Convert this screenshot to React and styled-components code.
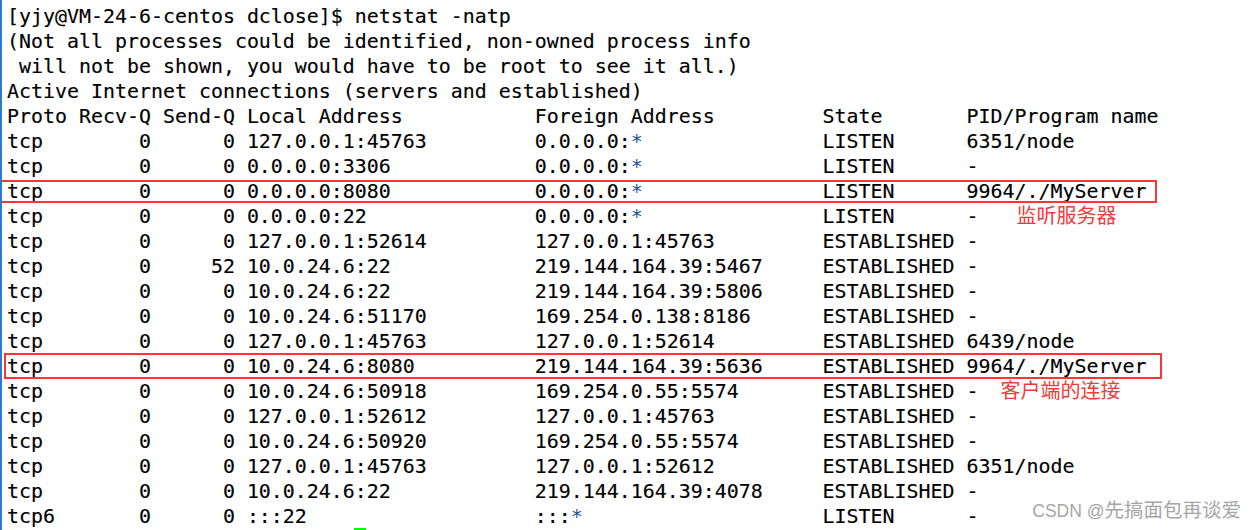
import React from 'react';
import styled, { createGlobalStyle } from 'styled-components';

const GlobalStyle = createGlobalStyle`
  html, body {
    margin: 0;
    padding: 0;
    background: #ffffff;
  }
`;

const Page = styled.div`
  position: relative;
  width: 1255px;
  height: 530px;
  overflow: hidden;
  background: #ffffff;
  border-left: 2px solid #2b7bd3;
  box-sizing: border-box;
`;

const Terminal = styled.div`
  display: flex;
  flex-direction: column;
  padding: 4px 0 0 5px;
  font-family: "DejaVu Sans Mono", "Liberation Mono", monospace;
  font-size: 19.93px;
  line-height: 25px;
  color: #000000;
  -webkit-text-stroke: 0.15px #000;
`;

const Line = styled.div`
  position: relative;
  height: 25px;
  white-space: pre;
`;

const Star = styled.span`
  color: #1f4e9a;
  -webkit-text-stroke: 0;
`;

const Frame = styled.div`
  position: absolute;
  left: ${p => p.left}px;
  top: ${p => p.top}px;
  width: ${p => p.width}px;
  height: ${p => p.height}px;
  border: 2px solid #ff3535;
  box-sizing: border-box;
  pointer-events: none;
`;

const Note = styled.span`
  display: inline-block;
  vertical-align: top;
  margin-left: ${p => p.gap}px;
  font-family: "Noto Sans CJK SC", "Noto Sans", sans-serif;
  font-size: 20px;
  line-height: 21px;
  color: #f23a3a;
  -webkit-text-stroke: 0;
`;

const Watermark = styled.div`
  position: absolute;
  right: 14px;
  bottom: 8px;
  font-family: "Liberation Sans", "Noto Sans CJK SC", sans-serif;
  font-size: 17.5px;
  line-height: 22px;
  color: #a6a6a6;
  white-space: nowrap;
`;

const Handle = styled.span`
  font-family: "Noto Sans CJK SC", sans-serif;
  font-size: 19.5px;
`;

const Cursor = styled.div`
  position: absolute;
  left: 352px;
  top: 528px;
  width: 12px;
  height: 2px;
  background: #00ff00;
`;

const padR = (s, n) => s + ' '.repeat(Math.max(0, n - s.length));
const padL = (s, n) => ' '.repeat(Math.max(0, n - s.length)) + s;

const row = (proto, recv, send, local, foreign, state, pid) =>
  padR(proto, 5) + ' ' + padL(recv, 6) + ' ' + padL(send, 6) + ' ' +
  padR(local, 23) + ' ' + padR(foreign, 23) + ' ' + padR(state, 11) + ' ' + pid;

const lines = [
  { text: '[yjy@VM-24-6-centos dclose]$ netstat -natp' },
  { text: '(Not all processes could be identified, non-owned process info' },
  { text: ' will not be shown, you would have to be root to see it all.)' },
  { text: 'Active Internet connections (servers and established)' },
  { text: 'Proto Recv-Q Send-Q Local Address           Foreign Address         State       PID/Program name' },
  { text: row('tcp', '0', '0', '127.0.0.1:45763', '0.0.0.0:*', 'LISTEN', '6351/node') },
  { text: row('tcp', '0', '0', '0.0.0.0:3306', '0.0.0.0:*', 'LISTEN', '-') },
  { text: row('tcp', '0', '0', '0.0.0.0:8080', '0.0.0.0:*', 'LISTEN', '9964/./MyServer'), frame: { left: -7, top: 1, width: 1157, height: 23 } },
  { text: row('tcp', '0', '0', '0.0.0.0:22', '0.0.0.0:*', 'LISTEN', '-'), note: '监听服务器', gap: 38 },
  { text: row('tcp', '0', '0', '127.0.0.1:52614', '127.0.0.1:45763', 'ESTABLISHED', '-') },
  { text: row('tcp', '0', '52', '10.0.24.6:22', '219.144.164.39:5467', 'ESTABLISHED', '-') },
  { text: row('tcp', '0', '0', '10.0.24.6:22', '219.144.164.39:5806', 'ESTABLISHED', '-') },
  { text: row('tcp', '0', '0', '10.0.24.6:51170', '169.254.0.138:8186', 'ESTABLISHED', '-') },
  { text: row('tcp', '0', '0', '127.0.0.1:45763', '127.0.0.1:52614', 'ESTABLISHED', '6439/node') },
  { text: row('tcp', '0', '0', '10.0.24.6:8080', '219.144.164.39:5636', 'ESTABLISHED', '9964/./MyServer'), frame: { left: -3, top: -1, width: 1158, height: 26 } },
  { text: row('tcp', '0', '0', '10.0.24.6:50918', '169.254.0.55:5574', 'ESTABLISHED', '-'), note: '客户端的连接', gap: 22 },
  { text: row('tcp', '0', '0', '127.0.0.1:52612', '127.0.0.1:45763', 'ESTABLISHED', '-') },
  { text: row('tcp', '0', '0', '10.0.24.6:50920', '169.254.0.55:5574', 'ESTABLISHED', '-') },
  { text: row('tcp', '0', '0', '127.0.0.1:45763', '127.0.0.1:52612', 'ESTABLISHED', '6351/node') },
  { text: row('tcp', '0', '0', '10.0.24.6:22', '219.144.164.39:4078', 'ESTABLISHED', '-') },
  { text: row('tcp6', '0', '0', ':::22', ':::*', 'LISTEN', '-') },
];

// asterisks render in a bluish tint on this terminal
const renderText = (text) =>
  text.split('*').map((part, i) => (
    <React.Fragment key={i}>
      {i > 0 && <Star>*</Star>}
      {part}
    </React.Fragment>
  ));

export default function App() {
  return (
    <>
      <GlobalStyle />
      <Page>
        <Terminal>
          {lines.map((l, i) => (
            <Line key={i}>
              {renderText(l.text)}
              {l.note && <Note gap={l.gap}>{l.note}</Note>}
              {l.frame && <Frame {...l.frame} />}
            </Line>
          ))}
        </Terminal>
        <Watermark>CSDN @<Handle>先搞面包再谈爱</Handle></Watermark>
        <Cursor />
      </Page>
    </>
  );
}
